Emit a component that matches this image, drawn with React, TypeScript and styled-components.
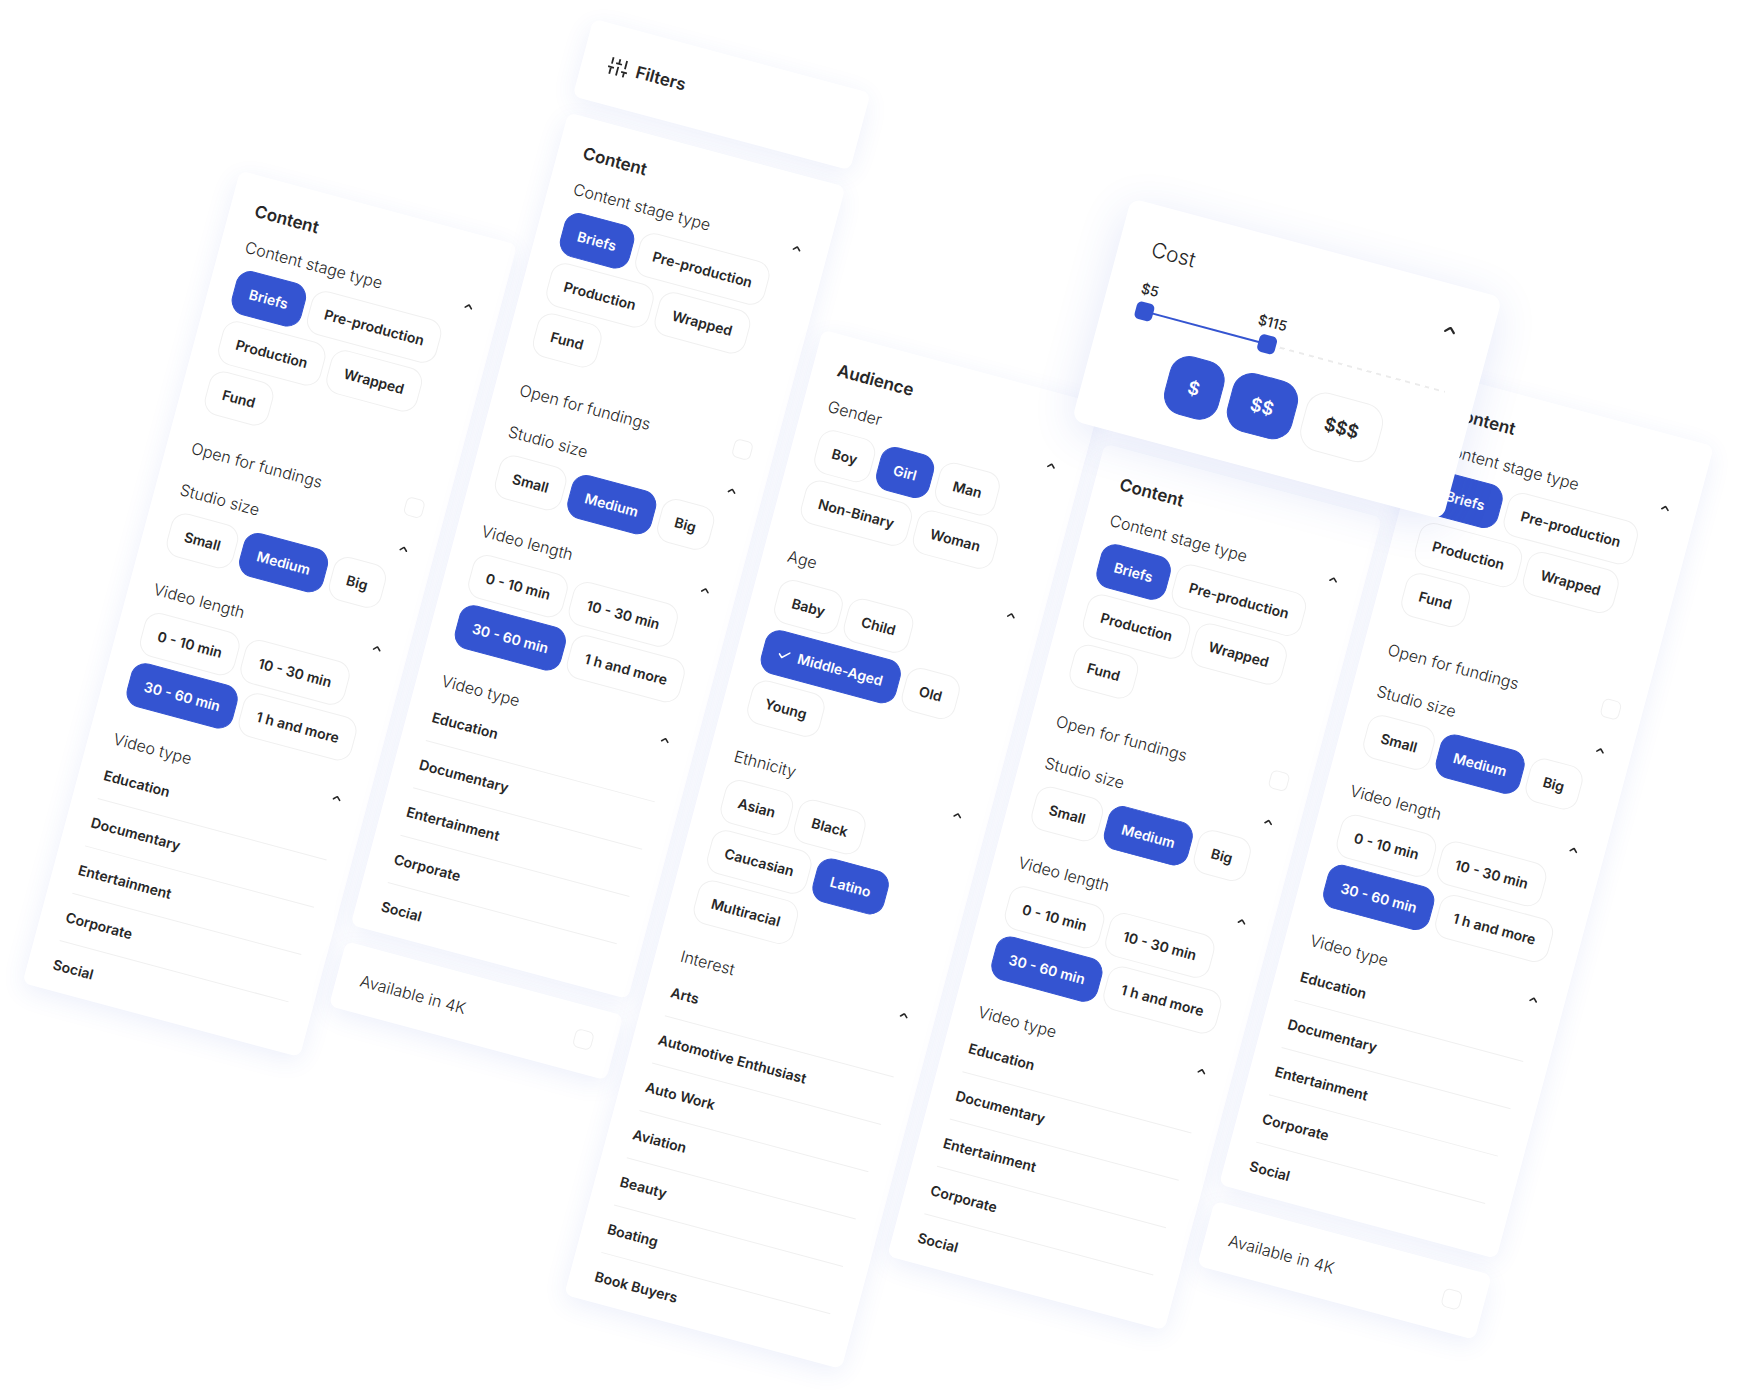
import React, { useState } from 'react';
import styled, { createGlobalStyle, css } from 'styled-components';

const color = {
  blue: '#3454d1',
  ink: '#272727',
  line: '#f0f0f0',
  white: '#ffffff',
};

const GlobalStyle = createGlobalStyle`
  *, *::before, *::after { box-sizing: border-box; }
  body {
    margin: 0;
    background: ${color.white};
    color: ${color.ink};
    font-family: Inter, 'Open Sans', sans-serif;
    -webkit-font-smoothing: antialiased;
  }
  button, input { font: inherit; color: inherit; margin: 0; }
`;

const Page = styled.main`
  min-height: 100vh;
  padding: 111px 10px 0 0;
  overflow: hidden;
  display: flex;
  justify-content: center;
  align-items: flex-start;
`;

const Board = styled.div`
  position: relative;
  flex: none;
  display: flex;
  align-items: flex-start;
  gap: 15px;
  transform: rotate(15deg);
`;

const Column = styled.div<{ $drop: number }>`
  width: 287px;
  margin-top: ${(p) => p.$drop}px;
  display: flex;
  flex-direction: column;
  gap: 17px;
`;

const Card = styled.section`
  background: ${color.white};
  border-radius: 8px;
  box-shadow: 0 6px 24px rgba(52, 84, 209, 0.09);
`;

const FilterCard = styled(Card)`
  padding: 22px 22px 0 25px;
`;

const HeadCard = styled(Card)`
  height: 80px;
  padding: 0 25px;
  display: flex;
  align-items: center;
  gap: 8px;
`;

const ToggleCard = styled(Card)`
  height: 67px;
  padding: 0 23px 0 24px;
  display: flex;
  flex-direction: column;
  justify-content: center;
`;

const Title = styled.h2`
  margin: 0;
  font-size: 17px;
  line-height: 26px;
  font-weight: 600;
`;

const CardTitle = styled(Title)`
  margin-bottom: 13px;
`;

const Group = styled.div`
  margin-bottom: 25px;
`;

const GroupHead = styled.div<{ $tight?: boolean }>`
  height: 24px;
  margin-bottom: ${(p) => (p.$tight ? 1 : 9)}px;
  display: flex;
  align-items: center;
  justify-content: space-between;
`;

const GroupName = styled.h3`
  margin: 0;
  padding-bottom: 2px;
  font-size: 16px;
  line-height: 22px;
  font-weight: 300;
`;

const Collapse = styled.button`
  width: 18px;
  height: 18px;
  padding: 0;
  border: 0;
  background: none;
  display: grid;
  place-items: center;
  cursor: pointer;
`;

const Chips = styled.div`
  display: flex;
  flex-wrap: wrap;
  gap: 7px 6px;
`;

const selected = css`
  background: ${color.blue};
  border-color: ${color.blue};
  color: ${color.white};
`;

const Chip = styled.button<{ $on: boolean }>`
  height: 45px;
  padding: 0 15px;
  display: flex;
  align-items: center;
  gap: 8px;
  border: 1px solid ${color.line};
  border-radius: 15px;
  background: ${color.white};
  font-size: 14px;
  font-weight: 600;
  white-space: nowrap;
  cursor: pointer;
  ${(p) => p.$on && selected}
`;

const ToggleLine = styled.label`
  height: 24px;
  display: flex;
  align-items: center;
  justify-content: space-between;
  font-size: 16px;
  line-height: 24px;
  font-weight: 300;
`;

const ToggleGroup = styled.div`
  margin-bottom: 20px;
`;

const Tick = styled.input`
  appearance: none;
  width: 19px;
  height: 19px;
  border: 1px solid ${color.line};
  border-radius: 6px;
  background: ${color.white};
  &:checked { ${selected} }
`;

const List = styled.ul`
  list-style: none;
  margin: 0;
  padding: 0 3px 1px 0;
`;

const Item = styled.li`
  height: 49px;
  border-bottom: 1px solid ${color.line};
  &:last-child { border-bottom-color: transparent; }
`;

const ItemLink = styled.a`
  display: block;
  font-size: 14px;
  line-height: 48px;
  font-weight: 600;
  color: inherit;
  text-decoration: none;
`;

const CostCard = styled(Card)`
  position: absolute;
  left: 868px;
  top: 36px;
  width: 384px;
  height: 230px;
  padding: 30px 33px 0;
  border-radius: 11px;
  box-shadow: 0 8px 44px rgba(52, 84, 209, 0.13);
`;

const CostHead = styled.div`
  height: 32px;
  display: flex;
  align-items: center;
  justify-content: space-between;
`;

const CostName = styled.h2`
  margin: 0;
  padding-bottom: 4px;
  font-size: 21px;
  line-height: 28px;
  font-weight: 300;
`;

const Slider = styled.div`
  position: relative;
  height: 18px;
  margin-top: 35px;
`;

const Rail = styled.div`
  position: absolute;
  inset: 8px -2px auto 9px;
  height: 2px;
  background: repeating-linear-gradient(90deg, #ebebeb 0 5px, transparent 5px 10px);
`;

const Fill = styled.div`
  position: absolute;
  top: 8px;
  height: 2px;
  background: ${color.blue};
`;

const Range = styled.input`
  appearance: none;
  position: absolute;
  inset: 0 auto auto 0;
  width: 100%;
  height: 18px;
  background: none;
  pointer-events: none;
  &::-webkit-slider-thumb {
    appearance: none;
    width: 18px;
    height: 18px;
    border-radius: 5px;
    background: ${color.blue};
    pointer-events: auto;
  }
`;

const Price = styled.output`
  position: absolute;
  bottom: 21px;
  transform: translateX(-50%);
  font-size: 14px;
  line-height: 20px;
  font-weight: 500;
`;

const CostChips = styled(Chips)`
  justify-content: center;
  gap: 9px;
  margin-top: 22px;
`;

const CostChip = styled(Chip)`
  height: 60px;
  padding: 0 21px;
  border-radius: 20px;
  font-size: 18px;
`;

const Chevron = ({ size = 10 }: { size?: number }) => (
  <svg width={size} height={size} viewBox="0 0 10 10" fill="none" stroke="currentColor" strokeWidth="1.6" strokeLinecap="round" strokeLinejoin="round" aria-hidden="true">
    <path d="M1.8 5.7 L4.5 3 Q5 2.5 5.5 3 L8.2 5.7" />
  </svg>
);

const CheckIcon = () => (
  <svg width="12" height="12" viewBox="0 0 12 12" fill="none" stroke="currentColor" strokeWidth="1.5" strokeLinecap="round" strokeLinejoin="round" aria-hidden="true">
    <path d="M1 6.2 L4.2 9.2 L11 2.8" />
  </svg>
);

const FiltersIcon = () => (
  <svg width="22" height="22" viewBox="0 0 22 22" fill="none" stroke="currentColor" strokeWidth="1.8" aria-hidden="true">
    <path d="M4.5 20v-7M4.5 9.5V3M11.5 20v-9M11.5 8V3M18.5 20v-5M18.5 11.5V3M1.5 13h6M8.5 8h6M15.5 15h6" />
  </svg>
);

function ChipSet({ options, initial, checked }: { options: string[]; initial: string; checked?: boolean }) {
  const [value, setValue] = useState(initial);
  return (
    <Chips>
      {options.map((o) => (
        <Chip key={o} type="button" $on={o === value} aria-pressed={o === value} onClick={() => setValue(o)}>
          {checked && o === value && <CheckIcon />}
          {o}
        </Chip>
      ))}
    </Chips>
  );
}

function ChipGroup({ name, ...set }: { name: string; options: string[]; initial: string; checked?: boolean }) {
  return (
    <Group>
      <GroupHead>
        <GroupName>{name}</GroupName>
        <Collapse type="button" aria-label={`Collapse ${name}`}><Chevron /></Collapse>
      </GroupHead>
      <ChipSet {...set} />
    </Group>
  );
}

function ListGroup({ name, items }: { name: string; items: string[] }) {
  return (
    <div>
      <GroupHead $tight>
        <GroupName>{name}</GroupName>
        <Collapse type="button" aria-label={`Collapse ${name}`}><Chevron /></Collapse>
      </GroupHead>
      <List>
        {items.map((i) => (
          <Item key={i}><ItemLink href="#">{i}</ItemLink></Item>
        ))}
      </List>
    </div>
  );
}

function Toggle({ name }: { name: string }) {
  return (
    <ToggleLine>
      {name}
      <Tick type="checkbox" />
    </ToggleLine>
  );
}

function ContentCard() {
  return (
    <FilterCard>
      <CardTitle>Content</CardTitle>
      <ChipGroup name="Content stage type" options={['Briefs', 'Pre-production', 'Production', 'Wrapped', 'Fund']} initial="Briefs" />
      <ToggleGroup><Toggle name="Open for fundings" /></ToggleGroup>
      <ChipGroup name="Studio size" options={['Small', 'Medium', 'Big']} initial="Medium" />
      <ChipGroup name="Video length" options={['0 - 10 min', '10 - 30 min', '30 - 60 min', '1 h and more']} initial="30 - 60 min" />
      <ListGroup name="Video type" items={['Education', 'Documentary', 'Entertainment', 'Corporate', 'Social']} />
    </FilterCard>
  );
}

function AudienceCard() {
  return (
    <FilterCard>
      <CardTitle>Audience</CardTitle>
      <ChipGroup name="Gender" options={['Boy', 'Girl', 'Man', 'Non-Binary', 'Woman']} initial="Girl" />
      <ChipGroup name="Age" options={['Baby', 'Child', 'Middle-Aged', 'Old', 'Young']} initial="Middle-Aged" checked />
      <ChipGroup name="Ethnicity" options={['Asian', 'Black', 'Caucasian', 'Latino', 'Multiracial']} initial="Latino" />
      <ListGroup name="Interest" items={['Arts', 'Automotive Enthusiast', 'Auto Work', 'Aviation', 'Beauty', 'Boating', 'Book Buyers']} />
    </FilterCard>
  );
}

const MIN = 5;
const MAX = 265;
const place = (v: number) => {
  const f = (v - MIN) / (MAX - MIN);
  return `calc(9px + (100% - 18px) * ${f})`;
};

function Cost() {
  const [low, setLow] = useState(5);
  const [high, setHigh] = useState(115);
  const [tiers, setTiers] = useState(['$', '$$']);
  const flip = (t: string) => setTiers(tiers.includes(t) ? tiers.filter((x) => x !== t) : [...tiers, t]);
  return (
    <CostCard>
      <CostHead>
        <CostName>Cost</CostName>
        <Collapse type="button" aria-label="Collapse Cost"><Chevron size={14} /></Collapse>
      </CostHead>
      <Slider>
        <Rail />
        <Fill style={{ left: place(low), width: `calc((100% - 18px) * ${(high - low) / (MAX - MIN)})` }} />
        <Price style={{ left: place(low) }}>${low}</Price>
        <Price style={{ left: place(high) }}>${high}</Price>
        <Range type="range" aria-label="Lowest cost" min={MIN} max={MAX} value={low} onChange={(e) => setLow(Math.min(+e.target.value, high))} />
        <Range type="range" aria-label="Highest cost" min={MIN} max={MAX} value={high} onChange={(e) => setHigh(Math.max(+e.target.value, low))} />
      </Slider>
      <CostChips>
        {['$', '$$', '$$$'].map((t) => (
          <CostChip key={t} type="button" $on={tiers.includes(t)} aria-pressed={tiers.includes(t)} onClick={() => flip(t)}>{t}</CostChip>
        ))}
      </CostChips>
    </CostCard>
  );
}

export default function App() {
  return (
    <>
      <GlobalStyle />
      <Page>
        <Board>
          <Column $drop={240}><ContentCard /></Column>
          <Column $drop={2}>
            <HeadCard><FiltersIcon /><Title>Filters</Title></HeadCard>
            <ContentCard />
            <ToggleCard><Toggle name="Available in 4K" /></ToggleCard>
          </Column>
          <Column $drop={243}><AudienceCard /></Column>
          <Column $drop={280}><ContentCard /></Column>
          <Column $drop={125}>
            <ContentCard />
            <ToggleCard><Toggle name="Available in 4K" /></ToggleCard>
          </Column>
          <Cost />
        </Board>
      </Page>
    </>
  );
}
